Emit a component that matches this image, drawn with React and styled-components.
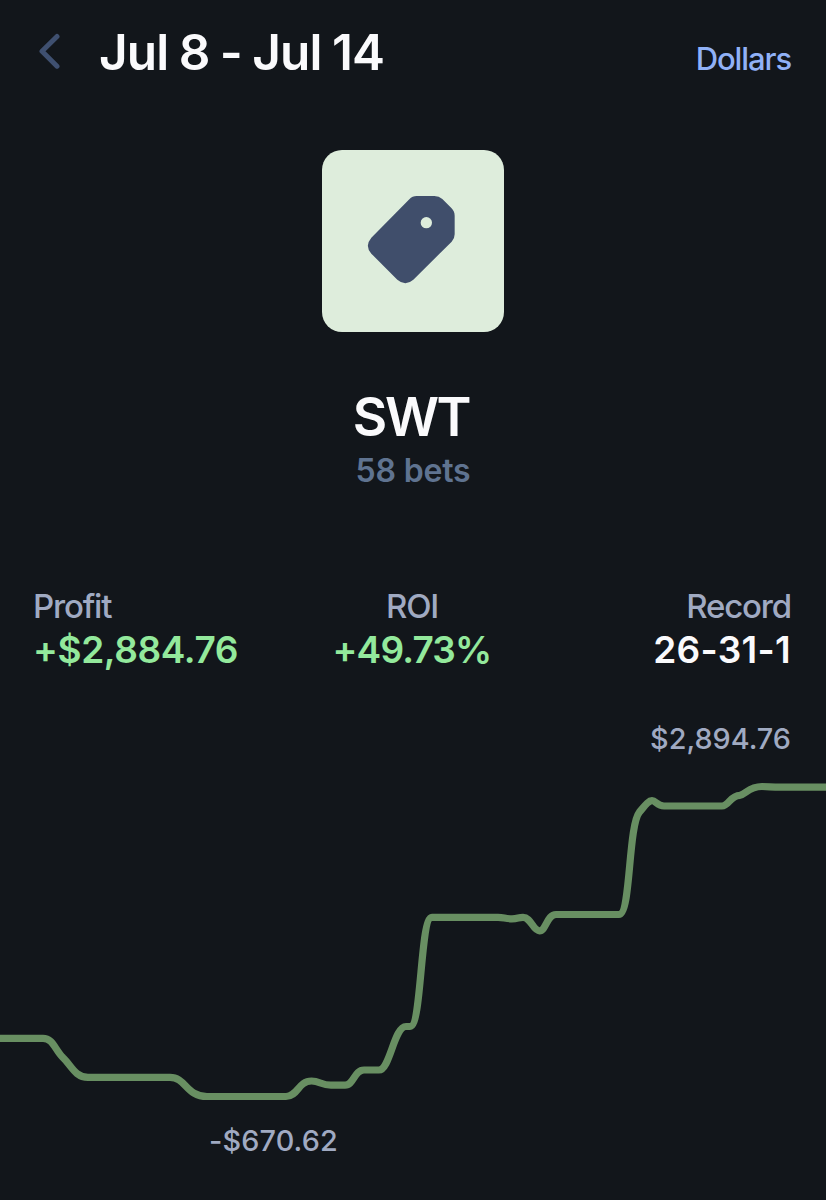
import React from 'react'
import styled, { createGlobalStyle } from 'styled-components'

const stats = [
    { label: 'Profit', value: '+$2,884.76', align: 'left', color: '#93e99c', spacing: '-0.4px' },
    { label: 'ROI', value: '+49.73%', align: 'center', color: '#93e99c', spacing: '-0.8px' },
    { label: 'Record', value: '26-31-1', align: 'right', color: '#fafafc', spacing: '0.3px' },
]

function App() {
    return (
        <Page>
            <GlobalStyle />
            <Header>
                <BackButton aria-label="Back">
                    <svg width="22" height="36" viewBox="0 0 22 36" fill="none">
                        <path d="M19 3.4L4 18.3L19 33.2" stroke="#3f5070" strokeWidth="5" strokeLinecap="round" strokeLinejoin="round" />
                    </svg>
                </BackButton>
                <Title>Jul 8 - Jul 14</Title>
                <UnitButton>Dollars</UnitButton>
            </Header>
            <Summary>
                <TagTile />
                <Name>SWT</Name>
                <Bets>58 bets</Bets>
            </Summary>
            <Stats>
                { stats.map((stat) => <StatItem key={stat.label} stat={stat} />) }
            </Stats>
            <ProfitChart high="$2,894.76" low="-$670.62" />
        </Page>
    )
}

function TagTile() {
    return (
        <Tile>
            <svg width="182" height="182" viewBox="0 0 546 546">
                <path
                    d="M284 138H337Q351 138 361 147L388 174Q398 184 398 197V253Q398 266 389 275L274 389Q250 410 226 389L148 311Q127 288 148 263L262 148Q271 138 284 138Z"
                    fill="#404e6b"
                />
                <circle cx="313" cy="218" r="17" fill="#deeddc" />
            </svg>
        </Tile>
    )
}

function StatItem({ stat }) {
    return (
        <Stat $align={stat.align}>
            <StatLabel>{stat.label}</StatLabel>
            <StatValue $color={stat.color} $spacing={stat.spacing}>{stat.value}</StatValue>
        </Stat>
    )
}

function ProfitChart({ high, low }) {
    return (
        <Chart>
            <HighLabel>{high}</HighLabel>
            <svg width="826" height="368" viewBox="0 756 826 368" fill="none">
                <path
                    d="M-5 1038.3H43C53 1038.3 55 1050 63 1057.7C71 1065 75 1077.4 88 1077.4H170C186 1077.4 186 1096.5 207 1096.5H286C298 1096.5 298 1081 311.5 1081C320 1081 321 1085.2 331 1085.2H345C354 1085.2 354 1070 364 1070H379C390 1070 394 1026.5 406 1026.5H410C422 1026.5 420 917.3 432 917.3H498C504 917.3 505 918.8 512 918.8C518 918.8 518 917.3 523 917.3C531 917.3 533 930.8 539.5 930.8C546 930.8 547 914.5 556 914.5H619C631 914.5 628 826 639.5 812C644 807 648 800.7 652 800.7C656 800.7 657 806 664 806H722C729 806 730 795.5 740 795.3C746 794 749 786.5 762 786.5C768 786.5 772 787.2 780 787.2H832"
                    stroke="#688f62"
                    strokeWidth="7.2"
                    strokeLinejoin="round"
                />
            </svg>
            <LowLabel>{low}</LowLabel>
        </Chart>
    )
}

const GlobalStyle = createGlobalStyle`
    * {
        box-sizing: border-box;
    }
    body {
        margin: 0;
        background: #12161b;
    }
    button {
        border: 0;
        padding: 0;
        background: none;
        font-family: inherit;
    }
`

const Page = styled.div`
    width: 826px;
    height: 1200px;
    overflow: hidden;
    background: #12161b;
    font-family: Inter, "Liberation Sans", sans-serif;
`

const Header = styled.header`
    display: flex;
    align-items: baseline;
    height: 150px;
    padding: 22px 35px 0 38px;
`

const BackButton = styled.button`
    display: flex;
    align-self: flex-start;
    width: 61px;
    padding-top: 11px;
`

const Title = styled.h1`
    margin: 0;
    flex: 1;
    font-size: 49.5px;
    line-height: 60px;
    font-weight: 600;
    letter-spacing: -0.9px;
    word-spacing: -1.2px;
    color: #fafafc;
`

const UnitButton = styled.button`
    font-size: 31px;
    line-height: 38px;
    font-weight: 500;
    color: #90b1f7;
    letter-spacing: -1.1px;
`

const Summary = styled.section`
    display: flex;
    flex-direction: column;
    align-items: center;
    height: 436px;
`

const Tile = styled.div`
    width: 182px;
    height: 182px;
    margin-bottom: 53px;
    border-radius: 20px;
    background: #deeddc;
`

const Name = styled.h2`
    margin: 0;
    padding-right: 4px;
    font-size: 53px;
    line-height: 64px;
    font-weight: 600;
    letter-spacing: -2.4px;
    color: #fafafc;
`

const Bets = styled.p`
    margin: 2px 0 0;
    font-size: 32px;
    line-height: 40px;
    font-weight: 600;
    letter-spacing: -0.2px;
    color: #5f7390;
`

const Stats = styled.section`
    display: grid;
    grid-template-columns: repeat(3, 1fr);
    height: 136px;
    padding: 0 35px 0 33px;
`

const Stat = styled.div`
    text-align: ${({ $align }) => $align};
`

const StatLabel = styled.div`
    font-size: 33px;
    line-height: 40px;
    font-weight: 500;
    letter-spacing: -1.2px;
    color: #a0aac2;
`

const StatValue = styled.div`
    margin-top: 2px;
    font-size: 37px;
    line-height: 44px;
    font-weight: 600;
    letter-spacing: ${({ $spacing }) => $spacing};
    color: ${({ $color }) => $color};
`

const Chart = styled.section`
    display: flex;
    flex-direction: column;
`

const ChartLabel = styled.div`
    font-size: 28.8px;
    line-height: 34px;
    font-weight: 500;
    color: #a0aac2;
`

const HighLabel = styled(ChartLabel)`
    padding-right: 35px;
    text-align: right;
`

const LowLabel = styled(ChartLabel)`
    padding-left: 209px;
    letter-spacing: 0.15px;
`

export default App
